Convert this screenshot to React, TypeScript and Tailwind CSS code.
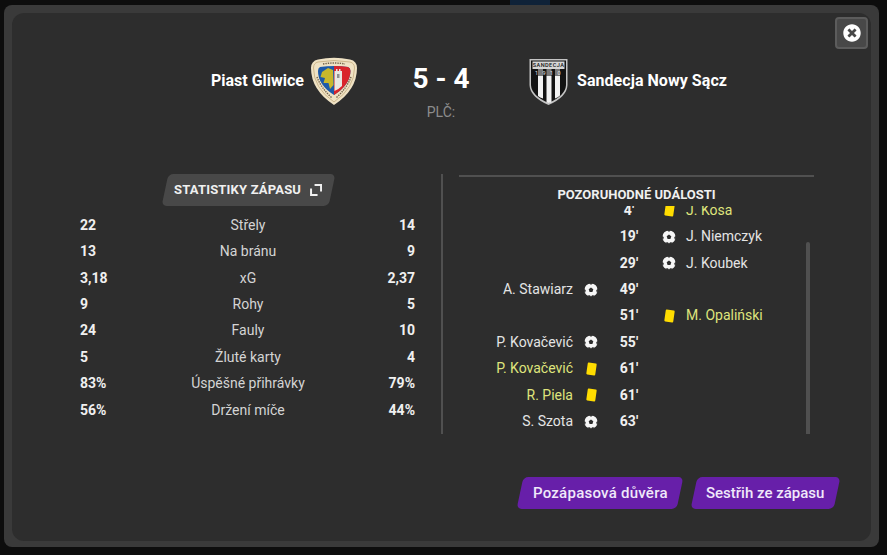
import React from 'react';
import { FaTimesCircle } from 'react-icons/fa';

const stats = [
  { home: '22', label: 'Střely', away: '14' },
  { home: '13', label: 'Na bránu', away: '9' },
  { home: '3,18', label: 'xG', away: '2,37' },
  { home: '9', label: 'Rohy', away: '5' },
  { home: '24', label: 'Fauly', away: '10' },
  { home: '5', label: 'Žluté karty', away: '4' },
  { home: '83%', label: 'Úspěšné přihrávky', away: '79%' },
  { home: '56%', label: 'Držení míče', away: '44%' },
];

type Ev = { minute: string; name: string; side: 'home' | 'away'; kind: 'goal' | 'card' };

const events: Ev[] = [
  { minute: "4'", name: 'J. Kosa', side: 'away', kind: 'card' },
  { minute: "19'", name: 'J. Niemczyk', side: 'away', kind: 'goal' },
  { minute: "29'", name: 'J. Koubek', side: 'away', kind: 'goal' },
  { minute: "49'", name: 'A. Stawiarz', side: 'home', kind: 'goal' },
  { minute: "51'", name: 'M. Opaliński', side: 'away', kind: 'card' },
  { minute: "55'", name: 'P. Kovačević', side: 'home', kind: 'goal' },
  { minute: "61'", name: 'P. Kovačević', side: 'home', kind: 'card' },
  { minute: "61'", name: 'R. Piela', side: 'home', kind: 'card' },
  { minute: "63'", name: 'S. Szota', side: 'home', kind: 'goal' },
];

const PiastCrest = () => (
  <svg width="48" height="48" viewBox="0 0 48 48">
    <path d="M8 2.5 Q24 -1 40 2.5 Q47 4 47 11 Q47 33 24 48 Q1 33 1 11 Q1 4 8 2.5Z" fill="#efe2c4" />
    <path d="M8 5 Q24 2 40 5 Q44.5 6 44.5 11 Q44.5 31 24 45 Q3.5 31 3.5 11 Q3.5 6 8 5Z" fill="none" stroke="#cdb78c" strokeWidth="1" />
    <path d="M10 10 Q24 8 38 10 Q40.5 11 40.5 14 Q40 28 24 38 Q8 28 8 14 Q8 11 10 10Z" fill="#1d5aa8" />
    <path d="M24 9 Q32 9 38 10 Q40.5 11 40.5 14 Q40 28 24 38Z" fill="#d9252b" />
    <path d="M12 15 L18 11 L23 13 L23.5 28 L20 32 L18.5 26 L13.5 26 L15 21 L10.5 20Z" fill="#c8b72c" />
    <path d="M24.5 34 V14 H26 V12 H27.5 V14 H29 V12 H30.5 V14 H32 V29 Q29 32 24.5 34Z" fill="#e8e8e2" />
    <rect x="27" y="17" width="2.5" height="4" fill="#8f8f8f" />
    <path d="M13 7 Q24 5 35 7 M7 20 Q11 31 22 41 M41 20 Q37 31 26 41" fill="none" stroke="#75644a" strokeWidth="1.4" strokeDasharray="1.4 1" />
  </svg>
);

const SandecjaCrest = () => (
  <svg width="39" height="47" viewBox="0 0 39 47">
    <path d="M0.5 1 H38.5 V27 Q38 39 19.5 47 Q1 39 0.5 27Z" fill="#c4c4c4" />
    <path d="M2 2.5 H37 V27 Q36.5 37.5 19.5 45 Q2.5 37.5 2 27Z" fill="#131313" />
    <path d="M9 11 H14 V40.5 Q11 39.5 9 38Z M17.5 11 H22.5 V44.5 L19.5 45 L17.5 44.5Z M26 11 H31 V37.5 Q29 39.5 26 40.5Z" fill="#f2f2f2" />
    <rect x="3.5" y="3.5" width="32" height="7.5" fill="#d6d6d6" />
    <rect x="3" y="11" width="33" height="7" fill="#131313" opacity="0.55" />
    <text x="19.5" y="9.3" textAnchor="middle" fontSize="5.6" fontWeight="500" letterSpacing="0.4" fill="#111111" style={{ fontFamily: 'Roboto, sans-serif' }}>
      SANDECJA
    </text>
    <text x="21" y="17" textAnchor="middle" fontSize="5.5" fill="#e6e6e6" letterSpacing="4.4" style={{ fontFamily: 'Roboto, sans-serif' }}>
      1910
    </text>
  </svg>
);

// white ball with a dark centre patch and notches round the edge
const Ball = () => (
  <svg width="14" height="14" viewBox="0 0 14 14">
    <circle cx="7" cy="7" r="6.6" fill="#f6f6f6" />
    <path d="M7 4.6 L9.3 6.3 L8.4 9 H5.6 L4.7 6.3Z" fill="#2d2d2d" />
    <path d="M5 0.6 L7 1.8 L9 0.6 L7 0Z M0.4 5.6 L1.8 7.6 L1 10 L0 8Z M13.6 5.6 L12.2 7.6 L13 10 L14 8Z M3.6 12.6 L6 12.2 L7 14 L4.6 14Z M10.4 12.6 L8 12.2 L7 14 L9.4 14Z" fill="#2d2d2d" />
  </svg>
);

const EventIcon = ({ kind }: { kind: Ev['kind'] }) =>
  kind === 'goal' ? <Ball /> : <span className="block h-[12px] w-[9px] rotate-[8deg] rounded-[1px] bg-[#ffdc00]" />;

const nameColor = (kind: Ev['kind']) => (kind === 'card' ? 'text-[#dfe47c]' : 'text-[#e4e4e4]');

const App = () => {
  return (
    <div className="relative h-[555px] w-[887px] overflow-hidden bg-[#0d0d0d] pt-[5px] pl-1 pr-[8px] pb-2 font-['Roboto',sans-serif]">
      <div className="absolute left-[510px] top-0 h-[5px] w-[40px] bg-[#0f2238]" />
      <div className="h-[542px] rounded-lg bg-[#3a3a3a] px-2 pt-2 pb-[6px]">
        <div className="relative h-full rounded-xl bg-[#2d2d2d]">
          <button className="absolute right-[3px] top-[4px] flex h-[32px] w-[33px] items-center justify-center rounded-[4px] border-2 border-[#5c5c5c] bg-[#484848]">
            <FaTimesCircle className="text-[18px] text-white" />
          </button>

          <div className="grid grid-cols-[346px_170px_1fr] pt-[44px]">
            <div className="flex h-[48px] items-center justify-end gap-[6px]">
              <span className="text-[16px] font-bold leading-5 text-white">Piast Gliwice</span>
              <PiastCrest />
            </div>
            <div className="flex flex-col items-center pr-[4px]">
              <span className="mt-[5px] text-[28px] font-bold leading-[34px] text-white">5 - 4</span>
              <span className="mt-[8px] text-[14px] leading-4 text-[#8c8c8c]">PLČ:</span>
            </div>
            <div className="flex h-[48px] items-center gap-[9px] pl-[1px]">
              <SandecjaCrest />
              <span className="text-[16px] font-bold leading-5 tracking-[0.05px] text-white">Sandecja Nowy Sącz</span>
            </div>
          </div>

          <div className="mt-[54px] flex h-[260px]">
            <div className="ml-[68px] w-[335px]">
              <div className="flex justify-center pl-[1px]">
                <div className="flex h-[32px] w-[167px] -skew-x-12 items-center justify-center rounded-[5px] bg-[#484848]">
                  <div className="flex skew-x-12 items-center gap-[9px]">
                    <span className="text-[13px] font-bold tracking-[0.18px] text-[#f0f0f0]">STATISTIKY ZÁPASU</span>
                    <svg width="12" height="12" viewBox="0 0 12 12" fill="none" stroke="#f0f0f0" strokeWidth="2">
                      <path d="M4.5 1 H11 V7.5" />
                      <path d="M1 4.5 V11 H7.5" />
                    </svg>
                  </div>
                </div>
              </div>
              <div className="mt-[6px]">
                {stats.map((s) => (
                  <div key={s.label} className="flex h-[26.45px] items-center justify-between text-[14px]">
                    <span className="w-[60px] font-bold text-[#f0f0f0]">{s.home}</span>
                    <span className="pl-[1px] text-[#d4d4d4]">{s.label}</span>
                    <span className="w-[60px] text-right font-bold text-[#f0f0f0]">{s.away}</span>
                  </div>
                ))}
              </div>
            </div>

            <div className="ml-[26px] w-[2px] bg-[#505050]" />

            <div className="ml-[16px] flex w-[355px] flex-col">
              <div className="mt-[1px] h-[2px] bg-[#505050]" />
              <div className="mt-[10px] text-center text-[13px] font-bold leading-[16px] text-[#f0f0f0]">
                POZORUHODNÉ UDÁLOSTI
              </div>
              <div className="relative mt-[3px] flex-1 overflow-hidden">
                <div className="absolute right-[4px] top-[36px] bottom-0 w-[4px] rounded-t-sm bg-[#505050]" />
                <div className="-mt-[9px]">
                  {events.map((e, i) => (
                    <div key={i} className="grid h-[26.45px] grid-cols-[114px_36px_40px_34px_1fr] items-center text-[14px]">
                      <span className={`text-right ${nameColor(e.kind)}`}>{e.side === 'home' ? e.name : ''}</span>
                      <span className="flex justify-center">{e.side === 'home' && <EventIcon kind={e.kind} />}</span>
                      <span className="whitespace-nowrap text-center font-bold text-[#f0f0f0]">{e.minute}</span>
                      <span className="flex justify-center pl-[6px]">{e.side === 'away' && <EventIcon kind={e.kind} />}</span>
                      <span className={`pl-[3px] ${nameColor(e.kind)}`}>{e.side === 'away' ? e.name : ''}</span>
                    </div>
                  ))}
                </div>
              </div>
            </div>
          </div>

          <div className="mt-[43px] flex justify-end gap-[14px] pr-[34px]">
            <button className="flex h-[32px] w-[160px] -skew-x-12 items-center justify-center rounded-[5px] bg-[#671fa9]">
              <span className="skew-x-12 text-[15px] font-medium tracking-[0.25px] text-[#f0e8fa]">Pozápasová důvěra</span>
            </button>
            <button className="flex h-[32px] w-[143px] -skew-x-12 items-center justify-center rounded-[5px] bg-[#671fa9]">
              <span className="skew-x-12 text-[15px] font-medium text-[#f0e8fa]">Sestřih ze zápasu</span>
            </button>
          </div>
        </div>
      </div>
    </div>
  );
};

export default App;
